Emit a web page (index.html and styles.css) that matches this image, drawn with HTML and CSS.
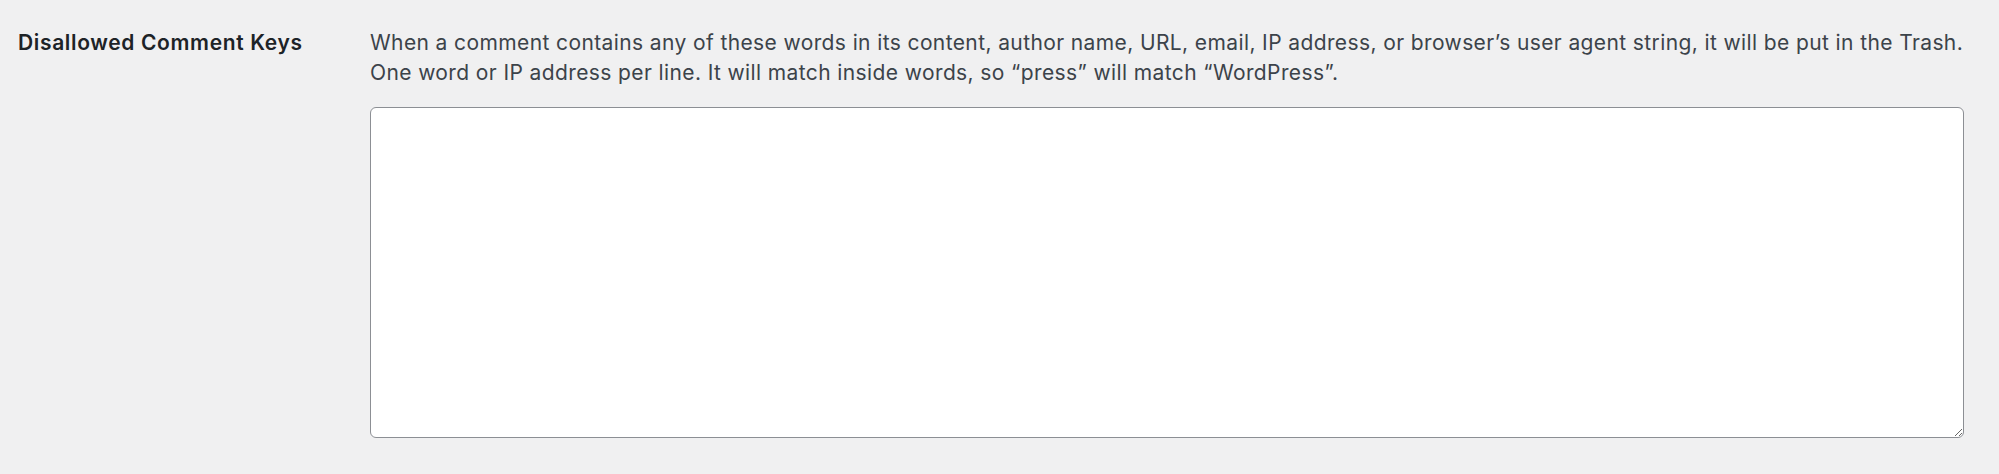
FILE: index.html
```html
<!DOCTYPE html>
<html lang="en">
  <head>
    <meta charset="UTF-8" />
    <meta name="viewport" content="width=device-width, initial-scale=1.0" />
    <title>Discussion Settings</title>
    <link rel="stylesheet" href="styles.css">
  </head>
  <body>
    <div class="settings-row">
      <div class="row-label">
        <label for="disallowed_keys">Disallowed Comment Keys</label>
      </div>

      <div class="row-field">
        <p class="description">
          When a comment contains any of these words in its content, author name, URL, email, IP address, or browser’s user agent string, it will be put in the Trash.<br>
          One word or IP address per line. It will match inside words, so “press” will match “WordPress”.
        </p>
        <textarea id="disallowed_keys" name="disallowed_keys" class="keys-input"></textarea>
      </div>
    </div>
  </body>
</html>
```

FILE: styles.css
```css
* {
  margin: 0;
  padding: 0;
  box-sizing: border-box;
}

body {
  background: #f0f0f1;
  font-family: Inter, "Noto Sans", "Liberation Sans", sans-serif;
  color: #3c434a;
}

.settings-row {
  display: grid;
  grid-template-columns: 352px 1fr;
  padding: 28px 35px 0 18px;
}

.row-label label {
  display: block;
  color: #1d2327;
  font-size: 21px;
  font-weight: 600;
  line-height: 30px;
  letter-spacing: 0.65px;
}

.description {
  font-size: 21px;
  line-height: 30px;
  letter-spacing: 0.39px;
  white-space: nowrap;
}

.keys-input {
  display: block;
  width: 100%;
  height: 331px;
  margin-top: 19px;
  background: #fff;
  border: 1.5px solid #8c8f94;
  border-radius: 6px;
  font-size: 21px;
  padding: 4px 12px;
}
```
